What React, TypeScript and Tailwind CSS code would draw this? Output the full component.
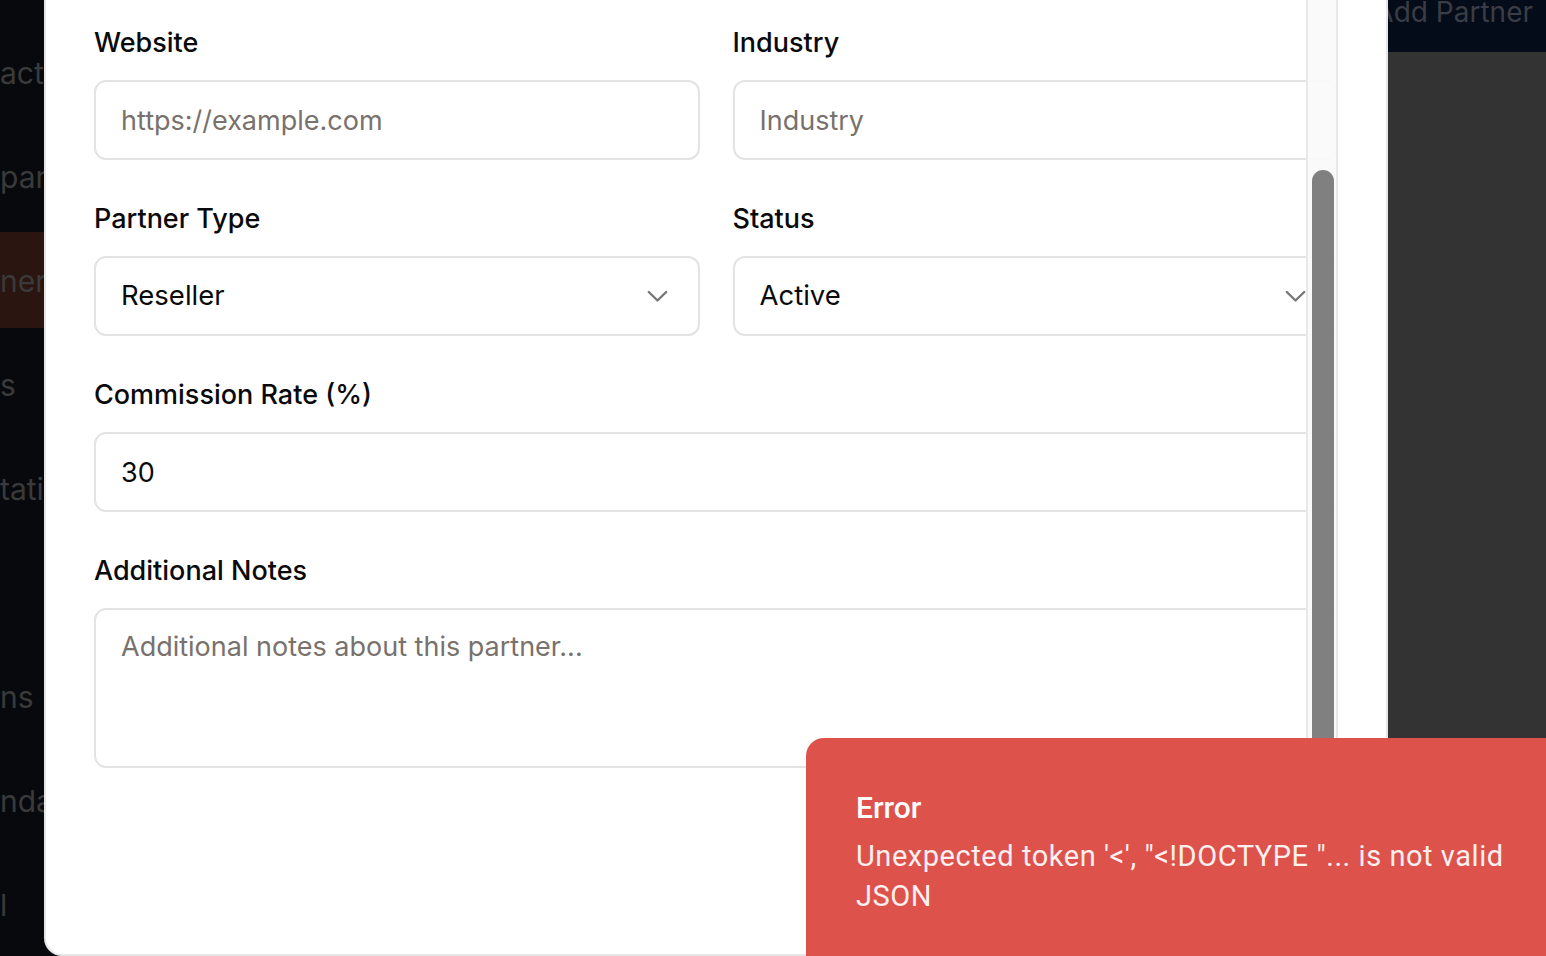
import React from 'react';

const navItems = ['acts', 'partments', 'ners', 's', 'tations', '', 'ns', 'ndar', 'l'];

function Chevron() {
  return (
    <svg width="21" height="13" viewBox="0 0 21 13" fill="none" stroke="#777777" strokeWidth="2.4" strokeLinecap="round" strokeLinejoin="round">
      <path d="M1.8 2 L10.5 10.5 L19.2 2" />
    </svg>
  );
}

function Label({ children }: { children: React.ReactNode }) {
  return <div className="h-[40px] pt-[1px] text-[27px] leading-[40px] font-medium text-[#0a0a0a]">{children}</div>;
}

function TextInput({ placeholder, value }: { placeholder?: string; value?: string }) {
  return (
    <div className="mt-[18px] flex h-[80px] items-center rounded-[12px] border-2 border-[#e3e3e3] bg-white px-[25px] pt-[3px] text-[27px]">
      {value ? <span className="text-[#0a0a0a]">{value}</span> : <span className="text-[#78716c]">{placeholder}</span>}
    </div>
  );
}

function SelectBox({ value }: { value: string }) {
  return (
    <div className="mt-[18px] flex h-[80px] items-center justify-between rounded-[12px] border-2 border-[#e3e3e3] bg-white pl-[25px] pr-[30px] text-[27.5px] text-[#0a0a0a]">
      <span>{value}</span>
      <Chevron />
    </div>
  );
}

export default function App() {
  return (
    <div className="relative flex h-[956px] w-[1546px] overflow-hidden bg-[#333333]" style={{ fontFamily: 'Inter, "Noto Sans", sans-serif' }}>
      {/* page behind the dialog, dimmed */}
      <aside className="flex w-[260px] shrink-0 flex-col gap-2 bg-[#07090d] pt-[24px]">
        {navItems.map((t, i) => (
          <div key={i} className={`flex h-[96px] items-center whitespace-nowrap pt-[2px] text-[30px] text-[#3a3a3a] ${i === 2 ? 'bg-[#2b1510]' : ''}`}>
            {t}
          </div>
        ))}
      </aside>
      <main className="flex flex-1 flex-col">
        <header className="flex h-[52px] justify-end bg-[#050c19] pr-[13px]">
          <div className="mt-[-8px] text-[28px] leading-[40px] text-[#3a3d45]">Add Partner</div>
        </header>
        <div className="flex-1 bg-[#333333]" />
      </main>

      {/* dialog */}
      <div className="absolute left-[44px] top-0 bottom-0 w-[1344px] overflow-hidden rounded-b-[18px] border-x-2 border-b-2 border-[#e6e6e6] bg-white">
        <div className="px-[48px] pt-[22px]">
          <div className="grid grid-cols-2 gap-x-[33px] gap-y-[38px]">
            <div>
              <Label>Website</Label>
              <TextInput placeholder="https://example.com" />
            </div>
            <div>
              <Label>Industry</Label>
              <TextInput placeholder="Industry" />
            </div>
            <div>
              <Label>Partner Type</Label>
              <SelectBox value="Reseller" />
            </div>
            <div>
              <Label>Status</Label>
              <SelectBox value="Active" />
            </div>
            <div className="col-span-2">
              <Label>Commission Rate (%)</Label>
              <TextInput value="30" />
            </div>
            <div className="col-span-2">
              <Label>Additional Notes</Label>
              <div className="mt-[18px] h-[160px] rounded-[12px] border-2 border-[#e3e3e3] px-[25px] pt-[19px] text-[27px] leading-[36px] text-[#78716c]">
                Additional notes about this partner...
              </div>
            </div>
          </div>
        </div>
        {/* scrollbar */}
        <div className="absolute top-0 bottom-0 left-[1260px] w-[32px] border-x-2 border-[#e8e8e8] bg-[#fafafa]/90">
          <div className="absolute left-[4px] top-[170px] h-[820px] w-[22px] rounded-full bg-[#808080]" />
        </div>
      </div>

      {/* toast */}
      <div className="absolute right-0 bottom-0 h-[218px] w-[740px] rounded-tl-[18px] bg-[#de524c] pl-[50px] pt-[50px] text-white" style={{ fontFamily: 'Roboto, "Liberation Sans", sans-serif' }}>
        <div className="text-[30px] font-medium leading-[40px]">Error</div>
        <div className="mt-[8px] max-w-[660px] text-[29px] leading-[40px] tracking-[0.55px] text-[#fdf0ef]">
          Unexpected token '&lt;', "&lt;!DOCTYPE "... is not valid JSON
        </div>
      </div>
    </div>
  );
}
